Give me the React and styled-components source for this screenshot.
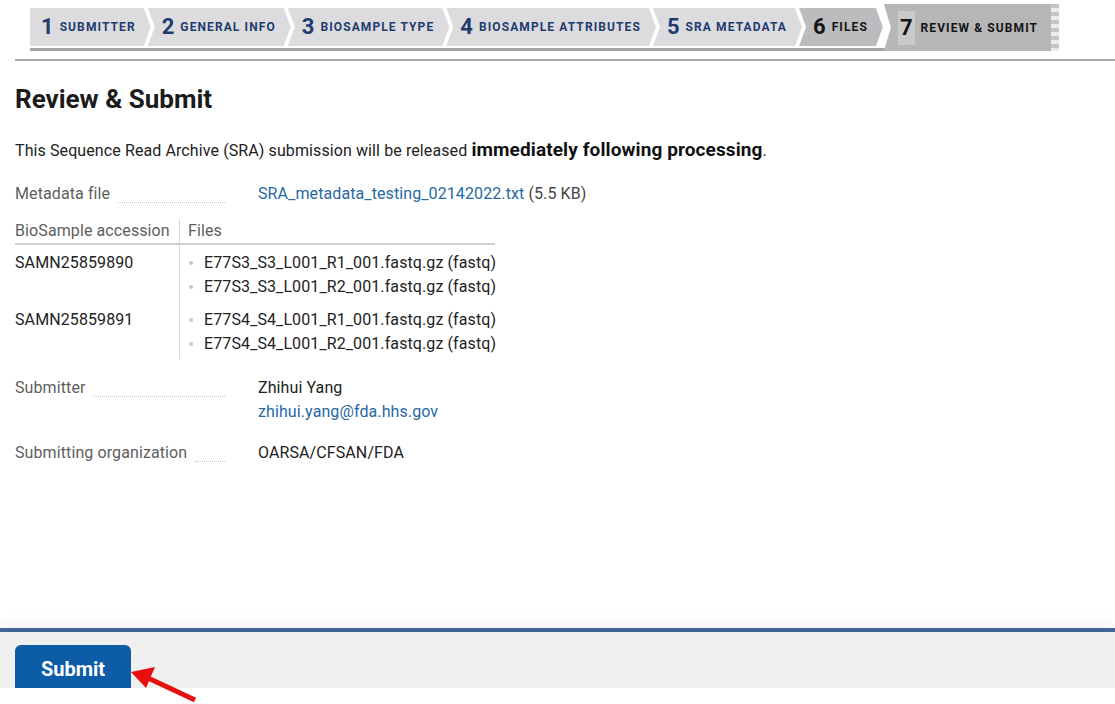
import React from "react";
import styled, { createGlobalStyle, css } from "styled-components";

const Global = createGlobalStyle`
  html, body { margin: 0; padding: 0; background: #fff; }
  body { font-family: Roboto, "Liberation Sans", Arial, sans-serif; }
`;

const Page = styled.div`
  position: relative;
  height: 704px;
  display: flex;
  flex-direction: column;
  overflow: hidden;
`;

const Main = styled.div`
  flex: 1;
`;

const Nav = styled.div`
  display: flex;
  align-items: flex-end;
  padding: 4px 0 0 30px;
`;

const StepGroup = styled.div`
  display: flex;
  flex-direction: column;
`;

const StepRow = styled.div`
  display: flex;
  height: 38px;
`;

const GroupLine = styled.div`
  margin-top: 2px;
  height: 3px;
  background: #a6a6a8;
  margin-right: -6px;
`;

const Step = styled.div`
  display: flex;
  align-items: center;
  gap: 6px;
  height: 100%;
  background: ${(p) => (p.$tone === "done" ? "#dcdcdf" : "#bcbcbf")};
  color: ${(p) => (p.$tone === "done" ? "#1f3c6f" : "#141414")};
  padding: 0 15px 0 ${(p) => (p.$first ? "11px" : "14px")};
  margin-left: ${(p) => (p.$first ? "0" : "-3px")};
  clip-path: ${(p) =>
    p.$first
      ? "polygon(0 0, calc(100% - 7px) 0, 100% 50%, calc(100% - 7px) 100%, 0 100%)"
      : "polygon(0 0, calc(100% - 7px) 0, 100% 50%, calc(100% - 7px) 100%, 0 100%, 7px 50%)"};
`;

const ActiveStep = styled.div`
  display: flex;
  align-items: center;
  gap: 6px;
  height: 47px;
  margin-left: 1px;
  padding: 0 13px 0 14px;
  background: #b6b6b9;
  color: #141414;
  clip-path: polygon(0 0, 100% 0, 100% 100%, 0 100%, 7px 50%);
`;

const Zigzag = styled.div`
  width: 8px;
  height: 47px;
  align-self: flex-end;
  background:
    repeating-linear-gradient(
      to bottom,
      #b6b6b9 0px,
      #b6b6b9 4px,
      #e6e6e8 4px,
      #e6e6e8 8px
    );
  opacity: 0.8;
`;

const StepNum = styled.span`
  font-size: 22px;
  font-weight: 700;
  line-height: 1;
  ${(p) =>
    p.$hl &&
    css`
      background: #c9c9cc;
      padding: 6px 2px;
    `}
`;

const StepLabel = styled.span`
  font-size: 12px;
  font-weight: 700;
  letter-spacing: 1.1px;
  text-transform: uppercase;
`;

const TopRule = styled.div`
  margin: 8px 0 0 15px;
  height: 2px;
  background: #a9a9a9;
`;

const Content = styled.div`
  padding: 23px 15px 0 15px;
  color: #222;
  letter-spacing: 0.1px;
`;

const Title = styled.h1`
  margin: 0;
  font-size: 26px;
  line-height: 30px;
  font-weight: 700;
  color: #1b1b1b;
  letter-spacing: 0;
`;

const Lead = styled.p`
  margin: 24px 0 0;
  font-size: 16px;
  line-height: 24px;
  color: #222;
  b {
    font-size: 19px;
    font-weight: 700;
    color: #111;
  }
`;

const Field = styled.div`
  display: grid;
  grid-template-columns: 210px 1fr;
  column-gap: 33px;
  margin-top: ${(p) => p.$mt || 0}px;
  font-size: 16px;
  line-height: 24px;
`;

const Label = styled.div`
  display: flex;
  align-items: flex-end;
  color: #5e5e5e;
  height: 24px;
`;

const Leader = styled.span`
  flex: 1;
  margin: 0 0 3px 8px;
  border-bottom: 1px dotted #c4c4c4;
`;

const Value = styled.div`
  color: #222;
`;

const Link = styled.a`
  color: #2768a4;
  text-decoration: none;
`;

const Muted = styled.span`
  color: #444;
`;

const Table = styled.div`
  display: grid;
  grid-template-columns: 164px 316px;
  margin-top: 13px;
  font-size: 16px;
  line-height: 24px;
`;

const Th = styled.div`
  color: #5e5e5e;
  border-bottom: 2px solid #cfcfcf;
  padding-left: ${(p) => (p.$files ? "8px" : "0")};
  ${(p) => p.$files && "border-left: 1px solid #dadada;"}
`;

const Td = styled.div`
  color: #222;
  padding-top: ${(p) => p.$pt}px;
  padding-bottom: ${(p) => p.$pb || 0}px;
  ${(p) => p.$files && "border-left: 1px solid #dadada; padding-left: 9px;"}
`;

const FileList = styled.ul`
  list-style: none;
  margin: 0;
  padding: 0;
`;

const FileItem = styled.li`
  display: flex;
  align-items: center;
  white-space: nowrap;
  &::before {
    content: "";
    width: 4px;
    height: 4px;
    border-radius: 50%;
    background: #c8c8c8;
    margin-right: 11px;
    flex: none;
  }
`;

const Footer = styled.div`
  border-top: 4px solid #41659a;
  box-shadow: 0 -8px 10px rgba(0, 0, 0, 0.035);
`;

const FooterBar = styled.div`
  height: 56px;
  background: #f0f0f0;
  padding: 13px 15px 0;
  box-sizing: border-box;
  overflow: hidden;
`;

const SubmitButton = styled.button`
  width: 116px;
  height: 48px;
  border: none;
  border-radius: 6px 6px 0 0;
  background: #0c5ca6;
  color: #fff;
  font-family: Roboto, "Liberation Sans", Arial, sans-serif;
  font-size: 20px;
  font-weight: 700;
  padding: 0;
`;

const BottomStrip = styled.div`
  height: 16px;
  background: #fff;
`;

const Arrow = styled.svg`
  position: absolute;
  left: 120px;
  top: 655px;
  overflow: visible;
`;

const steps = [
  ["1", "Submitter"],
  ["2", "General info"],
  ["3", "BioSample type"],
  ["4", "BioSample attributes"],
  ["5", "SRA metadata"],
];

export default function App() {
  return (
    <>
      <Global />
      <Page>
        <Main>
          <Nav>
            <StepGroup>
              <StepRow>
                {steps.map(([n, l], i) => (
                  <Step key={n} $tone="done" $first={i === 0}>
                    <StepNum>{n}</StepNum>
                    <StepLabel>{l}</StepLabel>
                  </Step>
                ))}
                <Step $tone="current">
                  <StepNum>6</StepNum>
                  <StepLabel>Files</StepLabel>
                </Step>
              </StepRow>
              <GroupLine />
            </StepGroup>
            <ActiveStep>
              <StepNum $hl>7</StepNum>
              <StepLabel>Review &amp; Submit</StepLabel>
            </ActiveStep>
            <Zigzag />
          </Nav>
          <TopRule />
          <Content>
            <Title>Review &amp; Submit</Title>
            <Lead>
              This Sequence Read Archive (SRA) submission will be released{" "}
              <b>immediately following processing</b>.
            </Lead>
            <Field $mt={19}>
              <Label>
                Metadata file
                <Leader />
              </Label>
              <Value>
                <Link href="#">SRA_metadata_testing_02142022.txt</Link>{" "}
                <Muted>(5.5 KB)</Muted>
              </Value>
            </Field>
            <Table>
              <Th>BioSample accession</Th>
              <Th $files>Files</Th>
              <Td $pt={6}>SAMN25859890</Td>
              <Td $pt={6} $files>
                <FileList>
                  <FileItem>E77S3_S3_L001_R1_001.fastq.gz (fastq)</FileItem>
                  <FileItem>E77S3_S3_L001_R2_001.fastq.gz (fastq)</FileItem>
                </FileList>
              </Td>
              <Td $pt={9} $pb={3}>SAMN25859891</Td>
              <Td $pt={9} $pb={3} $files>
                <FileList>
                  <FileItem>E77S4_S4_L001_R1_001.fastq.gz (fastq)</FileItem>
                  <FileItem>E77S4_S4_L001_R2_001.fastq.gz (fastq)</FileItem>
                </FileList>
              </Td>
            </Table>
            <Field $mt={17}>
              <Label>
                Submitter
                <Leader />
              </Label>
              <Value>
                Zhihui Yang
                <br />
                <Link href="#">zhihui.yang@fda.hhs.gov</Link>
              </Value>
            </Field>
            <Field $mt={17}>
              <Label>
                Submitting organization
                <Leader />
              </Label>
              <Value>OARSA/CFSAN/FDA</Value>
            </Field>
          </Content>
        </Main>
        <Footer>
          <FooterBar>
            <SubmitButton>Submit</SubmitButton>
          </FooterBar>
          <BottomStrip />
        </Footer>
        <Arrow width="90" height="50" viewBox="0 0 90 50">
          <line x1="75" y1="45" x2="28" y2="23" stroke="#e8100f" strokeWidth="5" />
          <polygon points="11,17 35,12 26,33" fill="#e8100f" />
        </Arrow>
      </Page>
    </>
  );
}
